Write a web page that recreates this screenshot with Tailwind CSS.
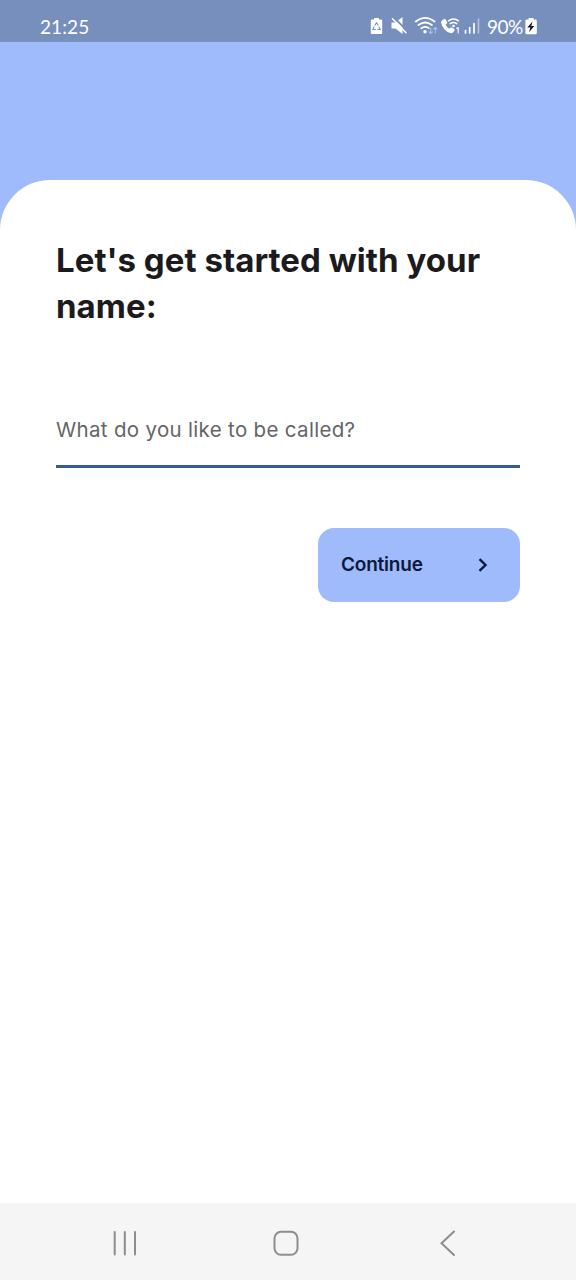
<!DOCTYPE html>
<html lang="en">
<head>
<meta charset="utf-8">
<title>Get started</title>
<script src="https://cdn.jsdelivr.net/npm/@tailwindcss/browser@4"></script>
</head>
<body class="bg-[#9fbbfb] font-['Inter',sans-serif]">
<div class="flex h-[1280px] w-[576px] flex-col overflow-hidden">
  <header class="flex h-[42px] shrink-0 items-start bg-[#778fbc] pt-[15px] pl-[40px] text-white">
    <span class="w-[329px] font-['Lato',sans-serif] text-[19px] leading-[23px] tracking-[0.1px]">21:25</span>
    <svg class="h-[24px] w-[115px]" viewBox="369 15 115 24" fill="none" stroke="#fff" stroke-linecap="round" stroke-linejoin="round">
      <!-- battery care -->
      <path d="M374 18h5v1.500h2.200a1 1 0 0 1 1 1v12.500a1 1 0 0 1-1 1h-9.400a1 1 0 0 1-1-1v-12.500a1 1 0 0 1 1-1h2.200z" fill="#fff" stroke="none"/>
      <path d="M375 25l1.500-2.300 1.500 2.300M379 27l1.200 2.500h-2.400M375.500 29.500h-2.700l1.200-2.500" stroke="#778fbc" stroke-width="1.100"/>
      <!-- muted speaker -->
      <path d="M391.500 22.500h4l7-5.500v17l-7-5.500h-4z" fill="#fff" stroke="none"/>
      <path d="M394.500 18l13 13.200" stroke="#778fbc" stroke-width="1.800"/>
      <path d="M392.500 18.700l13.500 14" stroke-width="1.500"/>
      <!-- wifi -->
      <path d="M415.800 21.500q9.400-7.200 18.800 0M418.500 25q6.700-5 13.400 0M421.300 28.300q3.900-2.800 7.400-.2" stroke-width="1.800"/>
      <circle cx="425" cy="31.700" r="1.700" fill="#fff" stroke="none"/>
      <path d="M430.700 28v5.500m-1.700-1.700l1.700 1.700 1.700-1.700M435.300 33v-5.500m-1.700 1.700l1.700-1.700 1.700 1.700" stroke="#a9bce0" stroke-width="1.200"/>
      <!-- wifi calling -->
      <path d="M442 20.500l2.200-1.600q.8-.4 1.300.4l1.600 2.700q.4.800-.3 1.400l-1.300 1.100q1.200 2.700 3.800 4.200l1.300-1.200q.6-.5 1.300 0l2.500 1.800q.7.600.1 1.300l-1.600 2q-1 .9-2.500.5q-7.400-2.300-9.300-10.300q-.2-1.400.9-2.300z" fill="#fff" stroke="none"/>
      <path d="M448.500 20.800q5-3.600 10 0M450.200 23.600q3.300-2.400 6.600 0" stroke-width="1.500"/>
      <circle cx="453.500" cy="26" r="1.300" fill="#fff" stroke="none"/>
      <path d="M456.700 28.500l1.500-1v5.500" stroke-width="1.100"/>
      <!-- signal -->
      <path d="M465.500 30.500v2.500M469.700 27.500v5.500M474 23.500v9.500" stroke-width="1.700"/>
      <path d="M478.500 19v14" stroke="#b4c3df" stroke-width="1.600"/>
    </svg>
    <span class="ml-[3px] w-[37px] font-['Lato',sans-serif] text-[19px] leading-[23px] tracking-[-0.5px] whitespace-nowrap">90%</span>
    <svg class="h-[24px] w-[14px]" viewBox="524 15 14 24">
      <path d="M528.500 18h5v1.500h2a1.300 1.300 0 0 1 1.300 1.300v12.200a1.300 1.300 0 0 1-1.300 1.300h-8.800a1.300 1.300 0 0 1-1.300-1.300v-12.200a1.300 1.300 0 0 1 1.300-1.300h1.800z" fill="#fff"/>
      <path d="M532.500 21.500l-5.200 6h3l-1.200 4.700 5.200-6.200h-3z" fill="#111827"/>
    </svg>
  </header>
  <main class="mt-[138px] flex grow flex-col rounded-t-[50px] bg-white px-[56px] pt-[57px]">
    <h1 class="text-[33px] leading-[46px] font-bold tracking-[0.04px] whitespace-nowrap text-[#1b1b1e]">Let's get started with your<br>name:</h1>
    <div class="mt-[73px] h-[66px] border-b-[3px] border-[#365b9a] pt-[14px]">
      <span class="block text-[20.5px] leading-[28px] tracking-[0.32px] whitespace-nowrap text-[#656567]">What do you like to be called?</span>
    </div>
    <button class="mt-[60px] flex h-[74px] w-[202px] items-center justify-between self-end rounded-[16px] bg-[#9fbbfb] pr-[32px] pl-[23px] text-[19px] font-semibold tracking-[-0.2px] text-[#0b1a3b]">
      <span>Continue</span>
      <svg class="h-[14px] w-[10px]" viewBox="0 0 10 14" fill="none" stroke="currentColor" stroke-width="2.400"><path d="M1.500 1.200L7.500 7l-6 5.800"/></svg>
    </button>
  </main>
  <nav class="h-[77px] shrink-0 bg-[#f5f5f5]">
    <svg class="h-[77px] w-[576px]" viewBox="0 1203 576 77" fill="none" stroke="#8d8d8d" stroke-width="2" stroke-linecap="round" stroke-linejoin="round">
      <path d="M114.700 1232v22.500M124.800 1232v22.500M135 1232v22.500"/>
      <rect x="274.500" y="1231.800" width="23" height="23" rx="6.500"/>
      <path d="M454 1231.500l-12.500 11.800 12.500 11.700" stroke-linejoin="miter"/>
    </svg>
  </nav>
</div>
</body>
</html>
